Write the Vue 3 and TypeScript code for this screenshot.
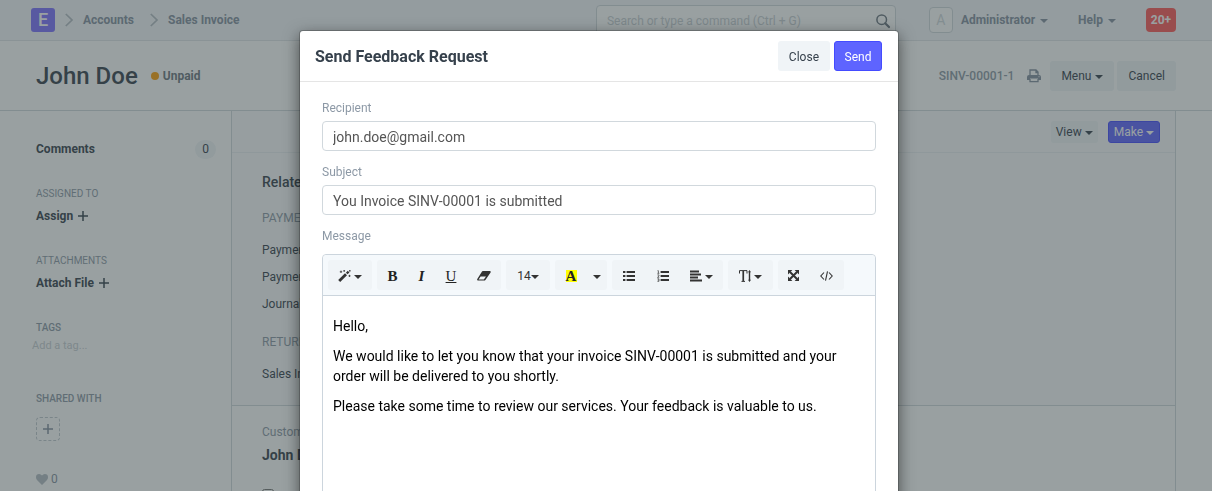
<script setup lang="ts">
import { ref } from 'vue'

interface LinkGroup {
  title: string
  links: string[]
}

const recipient = ref('john.doe@gmail.com')
const subject = ref('You Invoice SINV-00001 is submitted')
const search = ref('')
const tag = ref('')

const crumbs: string[] = ['Accounts', 'Sales Invoice']
const related: LinkGroup[] = [
  { title: 'Payment', links: ['Payment Entry', 'Payment Request', 'Journal Entry'] },
  { title: 'Returns', links: ['Sales Invoice'] },
]
const message: string[] = [
  'Hello,',
  'We would like to let you know that your invoice SINV-00001 is submitted and your order will be delivered to you shortly.',
  'Please take some time to review our services. Your feedback is valuable to us.',
]
</script>

<template>
  <div class="desk">
    <header class="navbar">
      <nav class="crumbs" aria-label="Breadcrumb">
        <a href="#" class="logo" aria-label="Home">E</a>
        <template v-for="crumb in crumbs" :key="crumb">
          <svg class="chevron" width="8" height="14" viewBox="0 0 8 14" aria-hidden="true">
            <path d="M.8 1L7 7L.8 13" fill="none" stroke="currentColor" stroke-width="1.7" />
          </svg>
          <a href="#" class="crumb">{{ crumb }}</a>
        </template>
      </nav>
      <div class="nav-right">
        <div class="search">
          <input v-model="search" type="text" aria-label="Search" placeholder="Search or type a command (Ctrl + G)" />
          <svg width="14" height="14" viewBox="0 0 14 14" aria-hidden="true">
            <circle cx="5.7" cy="5.7" r="4.8" fill="none" stroke="currentColor" stroke-width="1.5" />
            <path d="M9.2 9.2L13 13" fill="none" stroke="currentColor" stroke-width="2.2" stroke-linecap="round" />
          </svg>
        </div>
        <button type="button" class="nav-item user"><span class="avatar">A</span>Administrator<i class="caret"></i></button>
        <button type="button" class="nav-item help">Help<i class="caret"></i></button>
        <button type="button" class="notice">20+</button>
      </div>
    </header>

    <div class="page-head">
      <h1>John Doe</h1>
      <span class="status">Unpaid</span>
      <div class="head-actions">
        <span class="doc-id">SINV-00001-1</span>
        <button type="button" class="print" aria-label="Print">
          <svg width="14" height="14" viewBox="0 0 14 14" aria-hidden="true">
            <path d="M3 7V1H9L11 3V7M9 1V3.5H11M3 10V12.6H11V10" fill="none" stroke="currentColor" stroke-width="1.3" />
            <path fill-rule="evenodd" d="M2 6H12Q14 6 14 8V11H11V9.5H3V11H0V8Q0 6 2 6ZM11.5 7.2V8.2H12.5V7.2Z" fill="currentColor" />
          </svg>
        </button>
        <button type="button" class="btn menu">Menu<i class="caret"></i></button>
        <button type="button" class="btn cancel">Cancel</button>
      </div>
    </div>

    <div class="page-body">
      <aside class="sidebar">
        <div class="comments"><a href="#">Comments</a><span class="count">0</span></div>
        <section>
          <h2>Assigned To</h2>
          <button type="button" class="side-link">Assign
            <svg width="10" height="10" viewBox="0 0 10 10" aria-hidden="true"><path d="M5 0V10M0 5H10" stroke="currentColor" stroke-width="1.5" /></svg>
          </button>
        </section>
        <section>
          <h2>Attachments</h2>
          <button type="button" class="side-link">Attach File
            <svg width="10" height="10" viewBox="0 0 10 10" aria-hidden="true"><path d="M5 0V10M0 5H10" stroke="currentColor" stroke-width="1.5" /></svg>
          </button>
        </section>
        <section class="tags">
          <h2 class="strong">Tags</h2>
          <input v-model="tag" type="text" aria-label="Add a tag" placeholder="Add a tag..." />
        </section>
        <section class="shared">
          <h2 class="strong">Shared With</h2>
          <button type="button" class="share" aria-label="Share">
            <svg width="10" height="10" viewBox="0 0 10 10" aria-hidden="true"><path d="M5 0V10M0 5H10" stroke="currentColor" stroke-width="1.5" /></svg>
          </button>
        </section>
        <button type="button" class="likes">
          <svg width="12" height="11" viewBox="0 0 12 11" aria-hidden="true"><path d="M6 11L1 6Q0 5 0 3.3Q0 0 3.2 0Q4.9 0 6 1.6Q7.1 0 8.8 0Q12 0 12 3.3Q12 5 11 6Z" fill="currentColor" /></svg>
          0
        </button>
      </aside>

      <main class="form">
        <div class="form-toolbar">
          <button type="button" class="btn small">View<i class="caret"></i></button>
          <button type="button" class="btn small primary make">Make<i class="caret"></i></button>
        </div>
        <section class="dashboard">
          <h3>Related</h3>
          <div v-for="group in related" :key="group.title" class="group">
            <h4>{{ group.title }}</h4>
            <a v-for="link in group.links" :key="link" href="#">{{ link }}</a>
          </div>
        </section>
        <section class="fields">
          <span class="field-label">Customer</span>
          <strong>John Doe</strong>
          <input type="checkbox" aria-label="Is POS" />
        </section>
      </main>
    </div>

    <div class="overlay">
      <div class="modal" role="dialog" aria-modal="true" aria-labelledby="dialog-title">
        <div class="modal-head">
          <h2 id="dialog-title">Send Feedback Request</h2>
          <button type="button" class="btn close">Close</button>
          <button type="button" class="btn primary send">Send</button>
        </div>
        <form class="modal-body" @submit.prevent>
          <label for="recipient">Recipient</label>
          <input id="recipient" v-model="recipient" type="text" />
          <label for="subject">Subject</label>
          <input id="subject" v-model="subject" type="text" />
          <span id="message-label" class="label">Message</span>
          <div class="editor">
            <div class="tools" role="toolbar" aria-label="Formatting">
              <div class="tool-group">
                <button type="button" class="w44" aria-label="Style">
                  <svg width="13" height="12" viewBox="0 0 13 12" aria-hidden="true">
                    <path d="M1.2 11L8 4.2" stroke="currentColor" stroke-width="2.8" />
                    <path d="M8.7 3.5L10.6 1.6" stroke="currentColor" stroke-width="2.3" />
                    <path d="M3 .6V3M1.8 1.8H4.2M6.2 0V1.8M5.3 .9H7.1M11.8 0V1.6M11 .8H12.6M11.5 4.8V7M10.4 5.9H12.6" stroke="currentColor" stroke-width=".8" />
                  </svg>
                  <i class="caret"></i>
                </button>
              </div>
              <div class="tool-group">
                <button type="button" class="w31 serif" aria-label="Bold"><b>B</b></button>
                <button type="button" class="w27 serif" aria-label="Italic"><b><em>I</em></b></button>
                <button type="button" class="w32 serif" aria-label="Underline"><u>U</u></button>
                <button type="button" class="w34" aria-label="Clear formatting">
                  <svg width="14" height="10" viewBox="0 0 14 10" aria-hidden="true">
                    <path fill-rule="evenodd" d="M5.8 0H13Q14.2 .3 13.6 1.4L8.4 9Q8 9.6 7.3 9.6H.8Q-.4 9.2 .3 8.1L5 .6Q5.3 0 5.8 0ZM3.6 5.4L1.6 8.4H6.8L9 5.4Z" fill="currentColor" />
                  </svg>
                </button>
              </div>
              <div class="tool-group">
                <button type="button" class="w44 size" aria-label="Font size">14<i class="caret"></i></button>
              </div>
              <div class="tool-group">
                <button type="button" class="w32 serif" aria-label="Recent color"><b class="mark">A</b></button>
                <button type="button" class="w20" aria-label="More colors"><i class="caret"></i></button>
              </div>
              <div class="tool-group">
                <button type="button" class="w34" aria-label="Unordered list">
                  <svg width="12" height="10" viewBox="0 0 12 10" aria-hidden="true">
                    <path d="M0 1H2.4M0 5H2.4M0 9H2.4" stroke="currentColor" stroke-width="2.2" />
                    <path d="M3.6 1H12M3.6 5H12M3.6 9H12" stroke="currentColor" stroke-width="2" />
                  </svg>
                </button>
                <button type="button" class="w33" aria-label="Ordered list">
                  <svg width="12" height="12" viewBox="0 0 12 12" aria-hidden="true">
                    <path d="M.5 .7H1.4V3.3M.4 3.3H2.4M.4 4.9H2V6L.5 7.3H2.3M.4 8.8H2V11.3H.4M.8 10H2" fill="none" stroke="currentColor" stroke-width=".7" />
                    <path d="M3.6 2H12M3.6 6H12M3.6 10H12" stroke="currentColor" stroke-width="2" />
                  </svg>
                </button>
                <button type="button" class="w44" aria-label="Paragraph">
                  <svg width="12" height="12" viewBox="0 0 12 12" aria-hidden="true">
                    <path d="M0 1.5H9M0 4.5H11M0 7.5H8M0 10.5H12" stroke="currentColor" stroke-width="2" />
                  </svg>
                  <i class="caret"></i>
                </button>
              </div>
              <div class="tool-group">
                <button type="button" class="w45" aria-label="Line height">
                  <svg width="12" height="12" viewBox="0 0 12 12" aria-hidden="true">
                    <path d="M.5 3.5V.6H8V3.5M2.5 11.4H6" fill="none" stroke="currentColor" stroke-width="1" />
                    <path d="M3.4 1H5.1V11H3.4Z" fill="currentColor" />
                    <path d="M10.5 0L12 2.3H11.2V9.7H12L10.5 12L9 9.7H9.8V2.3H9Z" fill="currentColor" />
                  </svg>
                  <i class="caret"></i>
                </button>
              </div>
              <div class="tool-group">
                <button type="button" class="w31" aria-label="Full screen">
                  <svg width="11" height="11" viewBox="0 0 11 11" aria-hidden="true">
                    <path d="M0 0H4.4L0 4.4ZM11 0V4.4L6.6 0ZM0 11V6.6L4.4 11ZM11 11H6.6L11 6.6Z" fill="currentColor" />
                    <path d="M2 2L9 9M9 2L2 9" stroke="currentColor" stroke-width="2" />
                  </svg>
                </button>
                <button type="button" class="w35" aria-label="Code view">
                  <svg width="13" height="10" viewBox="0 0 13 10" aria-hidden="true">
                    <path d="M4 1.5L.8 5L4 8.5M9 1.5L12.2 5L9 8.5M7.5 .3L5.5 9.7" fill="none" stroke="currentColor" stroke-width="1.1" />
                  </svg>
                </button>
              </div>
            </div>
            <div class="content" contenteditable="true" role="textbox" aria-multiline="true" aria-labelledby="message-label">
              <p v-for="line in message" :key="line">{{ line }}</p>
            </div>
          </div>
        </form>
      </div>
    </div>
  </div>
</template>

<style>
body {
  margin: 0;
  background: #fff;
}
</style>

<style scoped>
.desk,
.desk * {
  box-sizing: border-box;
}
.desk {
  height: 100vh;
  overflow: hidden;
  font-family: Roboto, "Open Sans", sans-serif;
  font-size: 12px;
  line-height: 18px;
  color: #36414c;
}
button,
input {
  margin: 0;
  font: inherit;
  color: inherit;
}
button {
  padding: 0;
  border: 0;
  background: none;
  display: inline-flex;
  align-items: center;
  justify-content: center;
  white-space: nowrap;
}
a {
  color: inherit;
  text-decoration: none;
}
h1, h2, h3, h4, p {
  margin: 0;
}
svg {
  flex: none;
  overflow: visible;
}
.caret {
  margin: 2px 0 0 4px;
  border: 4px solid transparent;
  border-top-color: currentColor;
  border-bottom: 0;
}
.btn {
  height: 30px;
  padding: 0 11px;
  border-radius: 3px;
  background: #f0f4f7;
}
.btn.primary {
  color: #fff;
  background: #5e64ff;
  border: 1px solid #444bff;
}
.btn.small {
  height: 22px;
  padding: 0 5px;
}
.btn.small .caret {
  margin-left: 3px;
}

.navbar {
  height: 41px;
  padding: 0 36px 0 31px;
  display: flex;
  align-items: center;
  justify-content: space-between;
  background: #f5f7fa;
  border-bottom: 1px solid #e1e5e9;
  color: #8490a0;
  font-weight: 700;
}
.crumbs {
  display: flex;
  align-items: center;
}
.logo {
  width: 24px;
  height: 24px;
  border-radius: 3px;
  background: #7c70ff;
  color: #fff;
  font-size: 18px;
  font-weight: 500;
  line-height: 24px;
  text-align: center;
}
.chevron {
  margin: 0 10px;
  color: #b4bcc4;
}
.crumb + .chevron {
  margin-left: 16px;
}
.nav-right {
  display: flex;
  align-items: center;
}
.search {
  position: relative;
  width: 300px;
}
.search input {
  display: block;
  width: 100%;
  height: 31px;
  padding: 1px 30px 0 10px;
  border: 1px solid #d1d8dd;
  border-radius: 4px;
  background: #fff;
  font-weight: 400;
}
.search input::placeholder,
.tags input::placeholder {
  color: #c8ced3;
  opacity: 1;
}
.search svg {
  position: absolute;
  right: 6px;
  top: 9px;
  color: #6c7680;
}
.avatar {
  width: 24px;
  height: 26px;
  margin-right: 8px;
  border: 1px solid #d1d8dd;
  border-radius: 4px;
  background: #fff;
  color: #d1d8dd;
  font-size: 14px;
  font-weight: 400;
  line-height: 24px;
}
.user {
  margin-left: 33px;
}
.help {
  margin-left: 30px;
}
.nav-item .caret {
  margin-left: 5px;
}
.notice {
  width: 30px;
  height: 24px;
  margin-left: 30px;
  border-radius: 4px;
  background: #ff5858;
  color: #fff;
}

.page-head {
  height: 70px;
  padding: 0 36px;
  display: flex;
  align-items: center;
  border-bottom: 1px solid #d1d8dd;
}
h1 {
  font-size: 24px;
  font-weight: 500;
  line-height: 32px;
}
.status {
  display: flex;
  align-items: center;
  gap: 4px;
  margin-left: 13px;
  color: #6c7680;
  font-weight: 700;
}
.status::before {
  content: "";
  width: 8px;
  height: 8px;
  border-radius: 50%;
  background: #ffa00a;
}
.head-actions {
  margin-left: auto;
  display: flex;
  align-items: center;
}
.doc-id {
  color: #8d99a6;
  font-weight: 500;
}
.print {
  margin: 0 9px 0 13px;
  color: #8490a0;
}
.cancel {
  margin-left: 3px;
}

.page-body {
  display: flex;
  margin: 0 36px;
}
.sidebar {
  flex: none;
  width: 195px;
  padding: 29px 15px 0 0;
  display: flex;
  flex-direction: column;
}
.comments {
  display: flex;
  justify-content: space-between;
  font-weight: 700;
}
.count {
  width: 21px;
  height: 19px;
  border-radius: 10px;
  background: #f0f4f7;
  font-weight: 400;
  line-height: 19px;
  text-align: center;
}
.sidebar section {
  display: flex;
  flex-direction: column;
  align-items: flex-start;
  gap: 4px;
  margin-top: 27px;
}
.sidebar .comments + section {
  margin-top: 26px;
}
.sidebar h2 {
  color: #8d99a6;
  font-size: 10px;
  font-weight: 400;
  text-transform: uppercase;
}
.sidebar h2.strong {
  font-weight: 500;
}
.side-link {
  gap: 5px;
  font-weight: 700;
}
.sidebar .tags {
  gap: 0;
}
.tags input {
  width: 100%;
  height: 18px;
  margin-left: -4px;
  padding: 0;
  border: 0;
  background: none;
  font-size: 11px;
}
.sidebar .shared {
  gap: 9px;
  margin-top: 35px;
}
.share {
  width: 24px;
  height: 24px;
  border: 1px dashed #c0c8ce;
  border-radius: 4px;
  color: #8490a0;
}
.likes {
  align-self: flex-start;
  gap: 3px;
  margin-top: 29px;
  color: #8490a0;
}
.likes svg {
  color: #b4bcc4;
}

.form {
  flex: 1;
  height: 400px;
  overflow: hidden;
  border: 1px solid #d1d8dd;
  border-width: 0 1px;
}
.form-toolbar {
  height: 42px;
  padding-right: 15px;
  display: flex;
  align-items: center;
  justify-content: flex-end;
  gap: 10px;
  background: #fafbfc;
  border-bottom: 1px solid #ebeff2;
}
.dashboard {
  padding: 19px 30px 22px;
  background: #fafbfc;
  border-bottom: 1px solid #d1d8dd;
}
.dashboard h3 {
  font-size: 14px;
  font-weight: 500;
  line-height: 20px;
}
.group {
  display: flex;
  flex-direction: column;
  gap: 9px;
  margin-top: 17px;
}
.group + .group {
  margin-top: 20px;
}
.group h4 {
  margin-bottom: 5px;
  color: #8d99a6;
  font-weight: 400;
  text-transform: uppercase;
}
.fields {
  padding: 17px 30px;
  display: flex;
  flex-direction: column;
  align-items: flex-start;
  gap: 5px;
}
.field-label {
  color: #8d99a6;
}
.fields strong {
  font-size: 14px;
}
.fields input {
  width: 12px;
  height: 12px;
  margin-top: 20px;
}

.overlay {
  position: fixed;
  inset: 0;
  padding: 30px 14px 0 0;
  overflow: hidden;
  background: rgba(51, 65, 67, 0.5);
}
.modal {
  max-width: 600px;
  margin: 0 auto;
  background: #fff;
  background-clip: padding-box;
  border: 1px solid rgba(0, 0, 0, 0.2);
  border-radius: 4px;
  box-shadow: 0 5px 15px rgba(0, 0, 0, 0.5);
}
.modal-head {
  height: 51px;
  padding: 0 16px 0 15px;
  display: flex;
  align-items: center;
  border-bottom: 1px solid #e5e5e5;
}
.modal-head h2 {
  margin-right: auto;
  font-size: 16px;
  font-weight: 700;
  line-height: 20px;
  padding-top: 2px;
}
.modal-head .btn {
  padding-top: 1px;
}
.modal-head .send {
  width: 48px;
  margin-left: 4px;
  padding: 1px 0 0;
}
.modal-body {
  padding: 17px 22px;
  display: flex;
  flex-direction: column;
}
.modal-body label,
.label {
  margin-bottom: 4px;
  color: #8d99a6;
}
.modal-body input {
  height: 30px;
  margin-bottom: 12px;
  padding: 2px 10px 0;
  border: 1px solid #d1d8dd;
  border-radius: 4px;
  background: #fff;
  color: #555;
  font-size: 14px;
}
.modal-body .label {
  margin-bottom: 9px;
}
.editor {
  border: 1px solid #ccd5dd;
  border-radius: 4px;
}
.tools {
  display: flex;
  flex-wrap: wrap;
  gap: 5px;
  padding: 5px;
  background: #f5f9fc;
  border-bottom: 1px solid #ccd5dd;
  border-radius: 4px 4px 0 0;
}
.tool-group {
  display: flex;
  border-radius: 3px;
  background: #f0f4f7;
}
.tool-group button {
  height: 30px;
  padding-top: 1px;
  color: #333;
}
.tool-group svg + .caret {
  margin-left: 3px;
}
.tool-group .serif {
  font-family: "Liberation Serif", serif;
  font-size: 15px;
  color: #222;
}
.mark {
  width: 11px;
  height: 12px;
  background: #ff0;
  line-height: 12px;
}
.tool-group .size .caret,
.tool-group .w20 .caret {
  margin-left: 0;
}
.w20 { width: 20px; }
.w27 { width: 27px; }
.w31 { width: 31px; }
.w32 { width: 32px; }
.w33 { width: 33px; }
.w34 { width: 34px; }
.w35 { width: 35px; }
.w44 { width: 44px; }
.w45 { width: 45px; }
.content {
  min-height: 300px;
  padding: 20px 10px;
  color: #000;
  font-size: 14px;
  line-height: 20px;
}
.content p {
  margin-bottom: 10px;
}
</style>
